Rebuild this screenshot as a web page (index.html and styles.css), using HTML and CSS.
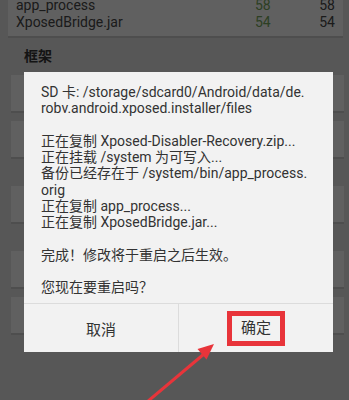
FILE: index.html
```html
<!DOCTYPE html>
<html>
<head>
    <title>Xposed Installer</title>
    <link rel="stylesheet" href="styles.css">
</head>
<body>
    <div class="page">
        <div class="card files">
            <div class="file-row">
                <span class="file-name">app_process</span>
                <span class="ver-latest">58</span>
                <span class="ver-installed">58</span>
            </div>
            <div class="file-row">
                <span class="file-name">XposedBridge.jar</span>
                <span class="ver-latest">54</span>
                <span class="ver-installed">54</span>
            </div>
        </div>

        <h2 class="section-title">框架</h2>
        <div class="card action"></div>
        <div class="card action"></div>
        <div class="card action spaced"></div>
        <div class="card action spaced"></div>
        <div class="card action"></div>
    </div>

    <div class="dim">
        <div class="dialog">
            <div class="dialog-body">
                <div class="line">SD 卡: /storage/sdcard0/Android/data/de.</div>
                <div class="line">robv.android.xposed.installer/files</div>
                <div class="line blank"></div>
                <div class="line">正在复制 Xposed-Disabler-Recovery.zip...</div>
                <div class="line">正在挂载 /system 为可写入...</div>
                <div class="line">备份已经存在于 /system/bin/app_process.</div>
                <div class="line">orig</div>
                <div class="line">正在复制 app_process...</div>
                <div class="line">正在复制 XposedBridge.jar...</div>
                <div class="line blank"></div>
                <div class="line">完成！修改将于重启之后生效。</div>
                <div class="line blank"></div>
                <div class="line">您现在要重启吗？</div>
            </div>
            <div class="dialog-buttons">
                <button class="dlg-btn">取消</button>
                <button class="dlg-btn"><span class="mark">确定</span></button>
            </div>
        </div>
    </div>

    <!-- annotation arrow pointing at the confirm button -->
    <svg class="arrow" width="349" height="400" viewBox="0 0 349 400">
        <line x1="147" y1="402" x2="204" y2="354" stroke="#e8343a" stroke-width="3"/>
        <polygon points="214,344 206.5,359.5 197.5,349" fill="#e8343a"/>
    </svg>
</body>
</html>
```

FILE: styles.css
```css
body {
    margin: 0;
    width: 349px;
    height: 400px;
    overflow: hidden;
    background: #dadada;
    font-family: Roboto, "Noto Sans CJK SC", sans-serif;
    color: #444;
}
.page {
    margin-top: -4px;
}
.card {
    background: #f0f0f0;
    border-bottom: 2px solid #c4c4c4;
    margin: 0 5px 0 11px;
}
.files {
    margin: 0 6px 0 8px;
    padding: 1px 8px 5px 8px;
}
.file-row {
    display: flex;
    font-size: 14px;
    line-height: 17px;
}
.file-name {
    flex: 1;
}
.ver-latest {
    width: 40px;
    color: #6f9f58;
}
.ver-installed {
    width: 40px;
    text-align: right;
}
.section-title {
    margin: 0;
    padding: 10px 0 10px 24px;
    font-size: 14px;
    line-height: 17px;
    font-weight: bold;
    color: #333;
}
.action {
    height: 36px;
    margin-bottom: 8px;
}
.action.spaced {
    margin-top: 27px;
}

/* dialog over the dimmed page */
.dim {
    position: fixed;
    left: 0;
    top: 0;
    right: 0;
    bottom: 0;
    background: rgba(0, 0, 0, 0.6);
    display: flex;
    justify-content: center;
    align-items: flex-start;
    padding-top: 72px;
}
.dialog {
    width: 309px;
    margin-left: 8px;
    background: #f2f2f2;
}
.dialog-body {
    padding: 12px 10px 8px 17px;
    font-size: 14px;
    line-height: 16.25px;
    color: #333;
}
.line {
    white-space: nowrap;
}
.line.blank {
    height: 16.25px;
}
.dialog-buttons {
    display: flex;
    border-top: 1px solid #dcdcdc;
    height: 48px;
}
.dlg-btn {
    flex: 1;
    background: none;
    border: none;
    font-family: Roboto, "Noto Sans CJK SC", sans-serif;
    font-size: 15px;
    color: #333;
    padding: 0;
}
.dlg-btn + .dlg-btn {
    border-left: 1px solid #dcdcdc;
}
.mark {
    display: inline-block;
    border: 5px solid #e8343a;
    padding: 4px 9px;
    line-height: 17px;
}
.arrow {
    position: fixed;
    left: 0;
    top: 0;
    pointer-events: none;
}
```
